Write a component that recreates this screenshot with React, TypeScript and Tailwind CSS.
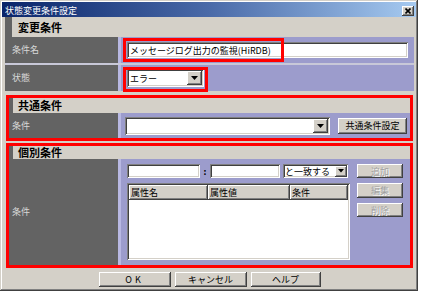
import React from "react";

const raised =
  "bg-[#d4d0c8] shadow-[inset_-1px_-1px_0_#404040,inset_1px_1px_0_#ffffff,inset_-2px_-2px_0_#808080]";
const sunken =
  "bg-white shadow-[inset_1px_1px_0_#808080,inset_-1px_-1px_0_#ffffff,inset_2px_2px_0_#404040,inset_-2px_-2px_0_#d4d0c8]";

function Arrow() {
  return (
    <div className={`${raised} w-[15px] h-[14px] flex items-center justify-center shrink-0`}>
      <svg width="7" height="4" viewBox="0 0 7 4">
        <polygon points="0,0 7,0 3.5,4" fill="#000" />
      </svg>
    </div>
  );
}

function Select({ w, h, text }: { w: number; h: number; text: string }) {
  return (
    <div
      className={`${sunken} flex items-center justify-between pl-[3px] pr-[2px] shrink-0`}
      style={{ width: w, height: h }}
    >
      <span className="text-[9px] leading-none text-black">{text}</span>
      <Arrow />
    </div>
  );
}

function Header({ title, stripe }: { title: string; stripe: string }) {
  return (
    <div className="flex items-stretch bg-[#d4d0c8] h-full">
      <div className={`${stripe} bg-[#636363]`} />
      <div className="flex items-center text-[11px] font-bold leading-none text-black">{title}</div>
    </div>
  );
}

function DisabledBtn({ label, h }: { label: string; h: string }) {
  return (
    <div
      className={`${raised} w-[46px] ${h} flex items-center justify-center text-[9px] leading-none text-[#a0a0a0] [text-shadow:1px_1px_0_#ffffff]`}
    >
      {label}
    </div>
  );
}

export default function App() {
  return (
    <div className="w-[421px] h-[295px] bg-white font-[Noto_Sans_CJK_JP,sans-serif]">
      <div className="w-[418px] h-[291px] bg-[#d4d0c8] p-[2px] flex flex-col shadow-[inset_-1px_-1px_0_#404040,inset_1px_1px_0_#d4d0c8,inset_-2px_-2px_0_#808080,inset_2px_2px_0_#ffffff]">
        {/* title bar */}
        <div className="h-[15px] bg-gradient-to-r from-[#0a246a] via-[#4a6aa8] to-[#a6caf0] flex items-end justify-between pl-[3px] pr-[2px]">
          <span className="text-[9px] leading-[12px] text-white">状態変更条件設定</span>
          <div className={`${raised} w-[12px] h-[10px] mb-[1px] flex items-center justify-center`}>
            <svg width="6" height="6" viewBox="0 0 6 6">
              <path d="M0.5 0.5 L5.5 5.5 M5.5 0.5 L0.5 5.5" stroke="#000" strokeWidth="1.6" />
            </svg>
          </div>
        </div>

        {/* body */}
        <div className="flex flex-col pl-[3px] pr-[2px]">
          {/* section 1 */}
          <div className="h-[20px]">
            <Header title="変更条件" stripe="w-[7px] mr-[6px]" />
          </div>
          <div className="flex h-[26px]">
            <div className="w-[113px] bg-[#636363] text-[#d8d8d8] text-[9px] pl-[7px] flex items-center">条件名</div>
            <div className="relative flex-1 bg-[#9c9ccc] border-l-[3px] border-[#b8b8e2] pl-[6px] pr-[6px] flex items-center">
              <div className={`${sunken} h-[16px] flex-1 flex items-center pl-[3px]`}>
                <span className="text-[9px] leading-none text-black">メッセージログ出力の監視(HiRDB)</span>
              </div>
              <div className="absolute left-[2px] top-[1px] w-[161px] h-[24px] border-[3px] border-[#ff0000]" />
            </div>
          </div>
          <div className="h-[2px] bg-[#c8c8d8]" />
          <div className="flex h-[26px]">
            <div className="w-[113px] bg-[#636363] text-[#d8d8d8] text-[9px] pl-[7px] flex items-center">状態</div>
            <div className="relative flex-1 bg-[#9c9ccc] border-l-[3px] border-[#b8b8e2] pl-[6px] flex items-center">
              <Select w={77} h={18} text="エラー" />
              <div className="absolute left-[2px] top-[2px] w-[85px] h-[25px] border-[3px] border-[#ff0000]" />
            </div>
          </div>
          <div className="h-[4px]" />

          {/* section 2 */}
          <div className="mx-[1px] border-[3px] border-[#ff0000] flex flex-col">
            <div className="h-[15px]">
              <Header title="共通条件" stripe="w-[4px] mr-[5px]" />
            </div>
            <div className="flex h-[25px]">
              <div className="w-[109px] bg-[#636363] text-[#d8d8d8] text-[9px] pl-[3px] flex items-center">条件</div>
              <div className="flex-1 bg-[#9c9ccc] border-l-[3px] border-[#b8b8e2] pl-[4px] flex items-center gap-[8px]">
                <Select w={205} h={18} text="" />
                <div className={`${raised} w-[69px] h-[16px] flex items-center justify-center text-[9px] leading-none text-black`}>
                  共通条件設定
                </div>
              </div>
            </div>
          </div>
          <div className="h-[2px]" />

          {/* section 3 */}
          <div className="mx-[1px] border-[3px] border-[#ff0000] flex flex-col">
            <div className="h-[13px]">
              <Header title="個別条件" stripe="w-[4px] mr-[5px]" />
            </div>
            <div className="flex h-[106px]">
              <div className="w-[109px] bg-[#636363] text-[#d8d8d8] text-[9px] pl-[3px] flex items-center">条件</div>
              <div className="flex-1 bg-[#9c9ccc] border-l-[3px] border-[#b8b8e2] pl-[6px] pt-[5px] flex">
                <div className="w-[223px] flex flex-col">
                  <div className="flex items-center h-[14px]">
                    <div className={`${sunken} w-[73px] h-[14px]`} />
                    <div className="w-[10px] text-center text-[9px] font-bold leading-none text-black">:</div>
                    <div className={`${sunken} w-[70px] h-[14px]`} />
                    <div className="w-[3px]" />
                    <div className={`${sunken} w-[65px] h-[14px] flex items-center justify-between pl-[2px] pr-[1px]`}>
                      <span className="text-[9px] leading-none text-black">と一致する</span>
                      <div className={`${raised} w-[12px] h-[11px] flex items-center justify-center`}>
                        <svg width="6" height="4" viewBox="0 0 6 4">
                          <polygon points="0,0 6,0 3,3.5" fill="#000" />
                        </svg>
                      </div>
                    </div>
                  </div>
                  <div className={`${sunken} mt-[5px] h-[77px] p-[2px] flex flex-col`}>
                    <div className="flex h-[15px]">
                      <div className={`${raised} w-[79px] flex items-center pl-[2px] text-[9px] leading-none text-black`}>属性名</div>
                      <div className={`${raised} w-[82px] flex items-center pl-[2px] text-[9px] leading-none text-black`}>属性値</div>
                      <div className={`${raised} w-[58px] flex items-center pl-[2px] text-[9px] leading-none text-black`}>条件</div>
                    </div>
                  </div>
                </div>
                <div className="ml-[7px] flex flex-col">
                  <DisabledBtn label="追加" h="h-[14px]" />
                  <div className="h-[5px]" />
                  <DisabledBtn label="編集" h="h-[15px]" />
                  <div className="h-[5px]" />
                  <DisabledBtn label="削除" h="h-[14px]" />
                </div>
              </div>
            </div>
          </div>

          {/* footer */}
          <div className="flex justify-center gap-[4px] pt-[4px]">
            <div className={`${raised} w-[72px] h-[15px] flex items-center justify-center text-[9px] leading-none text-black tracking-[3px]`}>OK</div>
            <div className={`${raised} w-[72px] h-[15px] flex items-center justify-center text-[9px] leading-none text-black`}>キャンセル</div>
            <div className={`${raised} w-[70px] h-[15px] flex items-center justify-center text-[9px] leading-none text-black`}>ヘルプ</div>
          </div>
        </div>
      </div>
    </div>
  );
}
